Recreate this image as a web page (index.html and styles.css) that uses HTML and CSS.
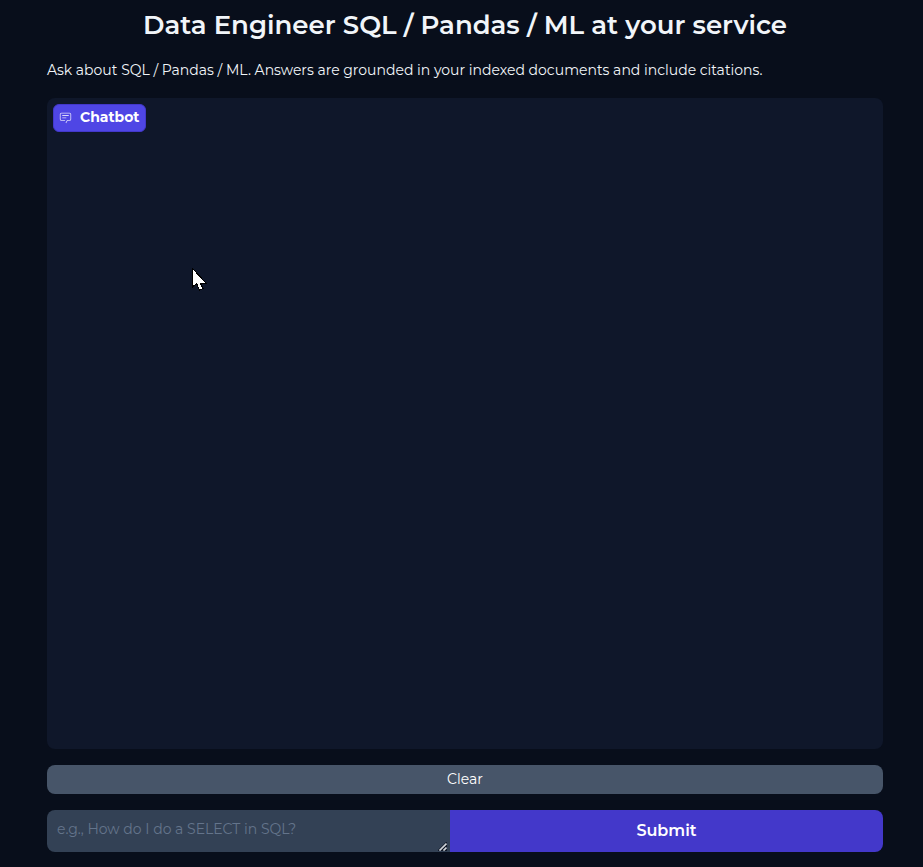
FILE: index.html
```html
<!DOCTYPE html>
<html lang="en">
<head>
<meta charset="utf-8">
<title>Data Engineer SQL / Pandas / ML at your service</title>
<link rel="stylesheet" href="styles.css">
</head>
<body>
<main class="app">
  <h1 class="title"><span>Data Engineer SQL / Pandas / ML at your service</span></h1>
  <p class="intro">Ask about SQL / Pandas / ML. Answers are grounded in your indexed documents and include citations.</p>
  <section class="chat">
    <div class="label">
      <svg class="label-icon" viewBox="0 0 32 32" fill="currentColor"><path d="M17.74 30L16 29l4-7h6a2 2 0 0 0 2-2V8a2 2 0 0 0-2-2H6a2 2 0 0 0-2 2v12a2 2 0 0 0 2 2h9v2H6a4 4 0 0 1-4-4V8a4 4 0 0 1 4-4h20a4 4 0 0 1 4 4v12a4 4 0 0 1-4 4h-4.84Z"/><path d="M8 10h16v2H8zM8 16h10v2H8z"/></svg>
      <span class="label-text">Chatbot</span>
    </div>
    <svg class="cursor" viewBox="0 0 15 23" shape-rendering="crispEdges"><path d="M.5.5v18.5l4-3.5 3 6.5 3.5-1.5-2.7-5.5H14Z" fill="#fff" stroke="#000"/></svg>
  </section>
  <button class="clear">Clear</button>
  <form class="composer">
    <div class="field">
      <span class="placeholder">e.g., How do I do a SELECT in SQL?</span>
      <svg class="grip" viewBox="0 0 9 9"><path d="M0 8L8 0H9V9H0Z" fill="#111827"/><path d="M1.5 8.5L8.5 1.5M5.5 8.5L8.5 5.5" stroke="#d1d5db" stroke-width="1.7"/></svg>
    </div>
    <button class="submit" type="button">Submit</button>
  </form>
</main>
</body>
</html>
```
FILE: styles.css
```css
* { box-sizing: border-box; }
body {
  margin: 0;
  height: 867px;
  overflow: hidden;
  background: #080e1b;
  color: #f1f5f9;
  font-family: Montserrat, Inter, sans-serif;
}
.app { width: 836px; margin-left: 47px; display: flex; flex-direction: column; }
.title { margin: 7px 0 0; font-size: 26px; line-height: 36px; font-weight: 600; text-align: center; white-space: nowrap; }
.intro { margin: 17px 0 18px; font-size: 14px; line-height: 20px; white-space: nowrap; }
.chat { position: relative; height: 651px; padding: 6px; border-radius: 8px; background: #0f172a; }
.label { display: flex; align-items: center; width: 93px; height: 28px; padding: 0 6px 2px 5px; border: 1px solid #4338ca; border-radius: 6px; background: #4f46e5; color: #fff; }
.label-icon { width: 13px; height: 13px; margin-right: 8px; opacity: .8; flex: none; }
.label-text { font-size: 14px; font-weight: 700; }
.cursor { position: absolute; left: 145px; top: 170px; width: 15px; height: 23px; }
button { padding: 0 0 2px; border: 0; color: #fff; font-family: inherit; }
.clear { margin-top: 16px; height: 29px; border-radius: 8px; background: #475569; font-size: 14px; }
.composer { display: flex; height: 42px; margin: 16px 0 0; border-radius: 8px; overflow: hidden; }
.field { position: relative; width: 403px; padding: 9px 10px; background: #334155; }
.placeholder { display: block; color: #64748b; font-size: 14px; line-height: 21px; white-space: nowrap; }
.grip { position: absolute; right: 3px; bottom: 1px; width: 9px; height: 9px; }
.submit { flex: 1; background: #4338ca; font-size: 16px; font-weight: 600; }
```
